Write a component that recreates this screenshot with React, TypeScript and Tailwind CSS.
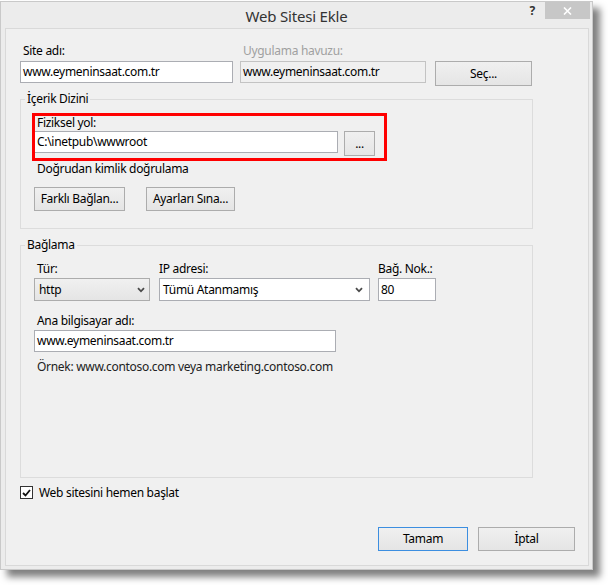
import React from "react";

function Chevron() {
  return (
    <svg width="8" height="6" viewBox="0 0 8 6" className="shrink-0">
      <path d="M1 1.2 L4 4.3 L7 1.2" fill="none" stroke="#4a4a4a" strokeWidth="1.8" />
    </svg>
  );
}

function Button({ label, className = "" }: { label: string; className?: string }) {
  return (
    <div
      className={`flex items-center justify-center border bg-gradient-to-b from-[#f0f0f0] to-[#e5e5e5] ${className}`}
    >
      {label}
    </div>
  );
}

function TextBox({ value, className = "" }: { value: string; className?: string }) {
  return (
    <div className={`flex items-center border border-[#abadb3] bg-white px-[2px] ${className}`}>
      {value}
    </div>
  );
}

export default function App() {
  return (
    <div className="relative w-[608px] h-[585px] bg-white font-['Noto_Sans',sans-serif] text-[12px] leading-[16px] tracking-[-0.3px] text-black">
      <div className="mt-[1px] w-[593px] h-[569px] bg-[#ececec] border border-[#c9c9c9] shadow-[7px_7px_7px_rgba(0,0,0,0.5)]">
        <div className="relative h-[26px] flex items-center justify-center">
          <span className="text-[15px] tracking-[-0.2px] text-[#333] pt-[1px]">Web Sitesi Ekle</span>
          <div className="absolute right-[2px] top-0 flex items-start">
            <span className="mr-[10px] mt-[1px] text-[12px] font-bold text-[#333]">?</span>
            <div className="w-[45px] h-[17px] bg-[#c7c7c7] flex items-center justify-center">
              <svg width="9" height="8" viewBox="0 0 9 8">
                <path d="M1 0.5 L8 7.5 M8 0.5 L1 7.5" stroke="white" strokeWidth="1.6" />
              </svg>
            </div>
          </div>
        </div>

        <div className="ml-[4px] w-[584px] h-[538px] border border-[#d9d9d9] bg-[#f0f0f0] pl-[14px] pr-[13px] pt-[14px]">
          {/* Site adı / havuz */}
          <div className="flex items-start">
            <div className="w-[213px]">
              <div className="pl-[3px] h-[16px]">Site adı:</div>
              <TextBox value="www.eymeninsaat.com.tr" className="mt-[2px] h-[22px]" />
            </div>
            <div className="ml-[7px] w-[186px]">
              <div className="pl-[3px] h-[16px] text-[#a0a0a0]">Uygulama havuzu:</div>
              <div className="mt-[2px] h-[22px] flex items-center border border-[#c3c3c3] bg-[#f0f0f0] px-[2px]">
                www.eymeninsaat.com.tr
              </div>
            </div>
            <Button label="Seç..." className="ml-[9px] mt-[18px] w-[97px] h-[25px] border-[#acacac]" />
          </div>

          {/* İçerik Dizini */}
          <fieldset className="mt-[5px] w-[513px] h-[138px] border border-[#dcdcdc]">
            <legend className="ml-[4px] px-[2px]">İçerik Dizini</legend>
            <div className="pl-[13px] pt-[8px]">
              <div className="pl-[3px] h-[16px]">Fiziksel yol:</div>
              <div className="flex items-start">
                <TextBox value="C:\inetpub\wwwroot" className="w-[304px] h-[22px]" />
                <Button label="..." className="ml-[6px] w-[31px] h-[25px] border-[#acacac]" />
              </div>
              <div className="mt-[5px] pl-[3px]">Doğrudan kimlik doğrulama</div>
              <div className="mt-[10px] flex">
                <Button label="Farklı Bağlan..." className="w-[91px] h-[24px] border-[#acacac]" />
                <Button label="Ayarları Sına..." className="ml-[21px] w-[89px] h-[24px] border-[#acacac]" />
              </div>
            </div>
          </fieldset>

          {/* Bağlama */}
          <fieldset className="mt-[8px] w-[513px] h-[241px] border border-[#dcdcdc]">
            <legend className="ml-[4px] px-[2px]">Bağlama</legend>
            <div className="pl-[13px] pt-[8px]">
              <div className="flex items-start">
                <div className="w-[116px]">
                  <div className="pl-[3px] h-[16px]">Tür:</div>
                  <div className="mt-[1px] h-[23px] flex items-center justify-between border border-[#acacac] bg-gradient-to-b from-[#f0f0f0] to-[#e5e5e5] pl-[4px] pr-[4px]">
                    <span>http</span>
                    <Chevron />
                  </div>
                </div>
                <div className="ml-[9px] w-[211px]">
                  <div className="h-[16px]">IP adresi:</div>
                  <div className="mt-[1px] h-[23px] flex items-center justify-between border border-[#abadb3] bg-white pl-[3px] pr-[6px]">
                    <span>Tümü Atanmamış</span>
                    <Chevron />
                  </div>
                </div>
                <div className="ml-[8px] w-[58px]">
                  <div className="h-[16px] whitespace-nowrap">Bağ. Nok.:</div>
                  <TextBox value="80" className="mt-[1px] h-[23px]" />
                </div>
              </div>
              <div className="mt-[12px] pl-[3px] h-[16px]">Ana bilgisayar adı:</div>
              <TextBox value="www.eymeninsaat.com.tr" className="mt-[1px] w-[302px] h-[22px]" />
              <div className="mt-[7px] pl-[3px] text-[#222]">Örnek: www.contoso.com veya marketing.contoso.com</div>
            </div>
          </fieldset>

          <div className="mt-[8px] h-[13px] flex items-center">
            <div className="w-[13px] h-[13px] border border-[#333] bg-white flex items-center justify-center">
              <svg width="9" height="8" viewBox="0 0 9 8">
                <path d="M1 4 L3.5 6.5 L8 1" fill="none" stroke="#111" strokeWidth="1.8" />
              </svg>
            </div>
            <span className="ml-[6px]">Web sitesini hemen başlat</span>
          </div>

          <div className="mt-[28px] flex justify-end gap-[10px]">
            <Button label="Tamam" className="w-[90px] h-[24px] border-[#3c8ee0]" />
            <Button label="İptal" className="w-[97px] h-[24px] border-[#acacac]" />
          </div>
        </div>
      </div>

      <div className="absolute left-[32px] top-[112px] w-[355px] h-[48px] border-[3px] border-[#ff0000]" />
    </div>
  );
}
